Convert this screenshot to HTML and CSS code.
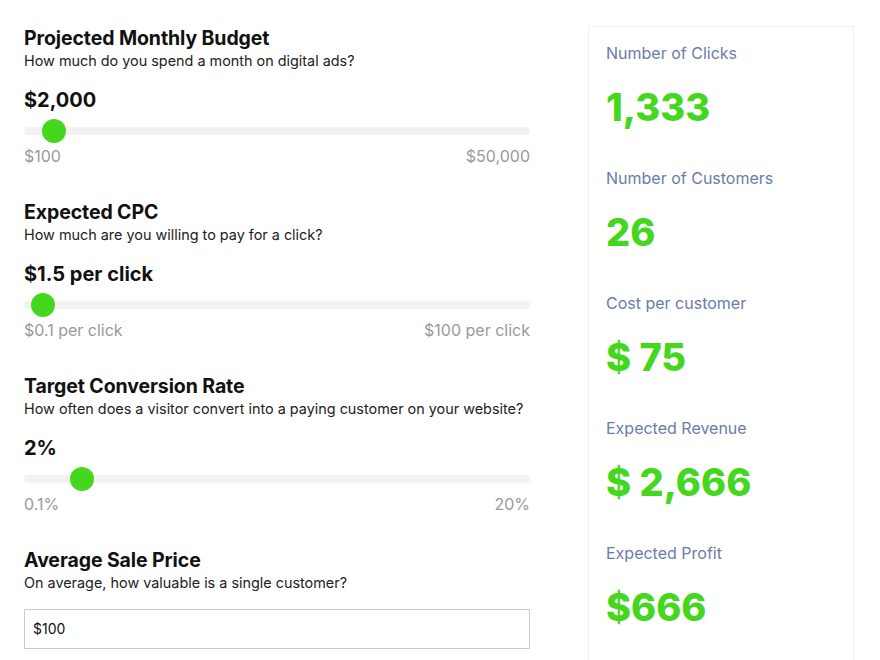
FILE: index.html
```html
<!DOCTYPE html>
<html>
<head>
<meta charset="utf-8">
<link rel="stylesheet" href="styles.css">
</head>
<body>
<div class="page">
  <div class="inputs">
    <section class="field">
      <h2 class="title">Projected Monthly Budget</h2>
      <p class="sub">How much do you spend a month on digital ads?</p>
      <div class="value">$2,000</div>
      <div class="slider"><div class="track"></div><div class="thumb" style="left:18px"></div></div>
      <div class="range"><span>$100</span><span>$50,000</span></div>
    </section>
    <section class="field">
      <h2 class="title">Expected CPC</h2>
      <p class="sub">How much are you willing to pay for a click?</p>
      <div class="value">$1.5 per click</div>
      <div class="slider"><div class="track"></div><div class="thumb" style="left:6.5px"></div></div>
      <div class="range"><span>$0.1 per click</span><span>$100 per click</span></div>
    </section>
    <section class="field">
      <h2 class="title">Target Conversion Rate</h2>
      <p class="sub">How often does a visitor convert into a paying customer on your website?</p>
      <div class="value">2%</div>
      <div class="slider"><div class="track"></div><div class="thumb" style="left:46px"></div></div>
      <div class="range"><span>0.1%</span><span>20%</span></div>
    </section>
    <section class="field">
      <h2 class="title">Average Sale Price</h2>
      <p class="sub">On average, how valuable is a single customer?</p>
      <div class="textbox">$100</div>
    </section>
  </div>
  <aside class="card">
    <div class="stat"><div class="label">Number of Clicks</div><div class="num">1,333</div></div>
    <div class="stat"><div class="label">Number of Customers</div><div class="num">26</div></div>
    <div class="stat"><div class="label">Cost per customer</div><div class="num">$ 75</div></div>
    <div class="stat"><div class="label">Expected Revenue</div><div class="num">$ 2,666</div></div>
    <div class="stat"><div class="label">Expected Profit</div><div class="num">$666</div></div>
  </aside>
</div>
</body>
</html>
```

FILE: styles.css
```css
* { box-sizing: border-box; }
html, body { margin: 0; padding: 0; background: #fff; }
body { font-family: Inter, "Noto Sans", sans-serif; color: #111; overflow: hidden; height: 660px; }
.page {
  display: grid;
  grid-template-columns: 506px 266px;
  column-gap: 58px;
  padding: 26px 0 0 24px;
  height: 660px;
  overflow: hidden;
}
.inputs { padding-top: 1px; }
.field { height: 174px; }
.title { margin: 0; font-size: 19.5px; line-height: 22px; font-weight: 700; letter-spacing: -0.1px; }
.sub { margin: 3px 0 0; font-size: 14.4px; line-height: 18px; color: #222; }
.value { margin-top: 19px; font-size: 20px; line-height: 22px; font-weight: 700; }
.slider { position: relative; height: 24px; margin-top: 8px; }
.track { position: absolute; left: 0; right: 0; top: 8px; height: 8px; border-radius: 4px; background: #f2f2f2; }
.thumb { position: absolute; top: 0; width: 24px; height: 24px; border-radius: 50%; background: #45d61e; }
.range { display: flex; justify-content: space-between; margin-top: 4px; font-size: 16px; line-height: 18px; color: #999; }
.textbox {
  margin-top: 17px;
  height: 40px;
  border: 1px solid #ccc;
  padding: 0 8px;
  font-size: 14px;
  line-height: 38px;
  color: #111;
}
.card {
  border: 1px solid #f0f0f0;
  border-bottom: none;
  padding: 16px 17px 0;
}
.stat { height: 125px; }
.label { font-size: 16px; line-height: 20px; color: #6b7ca8; }
.num { margin-top: 20px; font-size: 38px; line-height: 48px; font-weight: 800; color: #45d61e; }
```
